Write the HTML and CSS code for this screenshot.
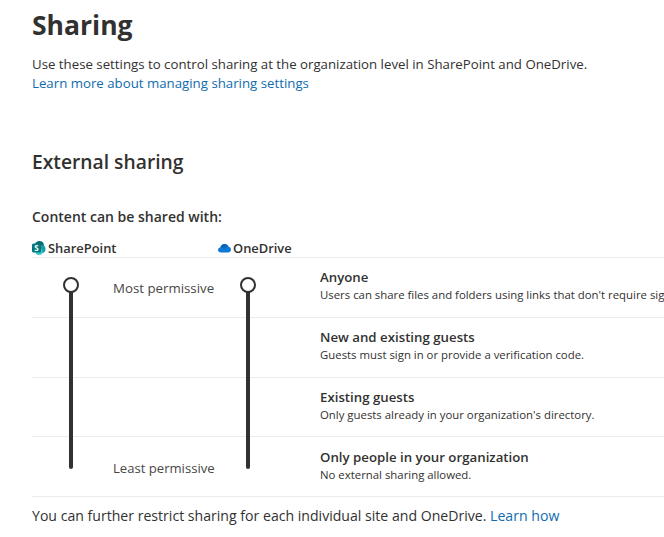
FILE: index.html
```html
<!DOCTYPE html>
<html lang="en">
<head>
  <meta charset="UTF-8" />
  <meta name="viewport" content="width=device-width, initial-scale=1.0" />
  <title>Sharing</title>
  <link rel="stylesheet" href="styles.css">
</head>
<body>
  <main>
    <h1 class="page-title">Sharing</h1>
    <p class="intro">
      Use these settings to control sharing at the organization level in SharePoint and OneDrive.<br>
      <a href="#">Learn more about managing sharing settings</a>
    </p>

    <h2 class="section-title">External sharing</h2>
    <div class="shared-with">Content can be shared with:</div>

    <div class="products">
      <span class="product product-sp">
        <svg width="14" height="14" viewBox="0 0 14 14">
          <circle cx="7.500" cy="4.500" r="4.500" fill="#036c70"/>
          <circle cx="9.500" cy="8" r="4" fill="#1a9ba1"/>
          <circle cx="7" cy="10.500" r="3.500" fill="#37c6d0"/>
          <rect x="0" y="2.500" width="9" height="9" rx="1.500" fill="#03787c"/>
          <text x="4.500" y="10" class="sp-letter">S</text>
        </svg>
        SharePoint
      </span>
      <span class="product product-od">
        <svg width="13" height="10" viewBox="0 0 13 10">
          <path d="M2.800 9.500C1.300 9.500 0 8.400 0 7 0 5.700 1 4.700 2.300 4.600 2.800 2.500 4.500 1 6.600 1c1.700 0 3.100 1 3.800 2.400C11.900 3.700 13 5 13 6.600c0 1.600-1.200 2.900-2.800 2.900z" fill="#0f78d4"/>
          <path d="M2.300 4.600C2.800 2.500 4.500 1 6.600 1c1.700 0 3.100 1 3.800 2.400C8 3.400 6.800 4.600 6.200 5.600 5.100 4.800 3.700 4.400 2.300 4.600z" fill="#0364b8"/>
        </svg>
        OneDrive
      </span>
    </div>

    <div class="levels">
      <div class="slider slider-sp"><span class="knob"></span></div>
      <div class="slider slider-od"><span class="knob"></span></div>

      <div class="level">
        <div class="level-hint">Most permissive</div>
        <div class="level-text">
          <strong>Anyone</strong>
          <span>Users can share files and folders using links that don't require sign-in.</span>
        </div>
      </div>
      <div class="level">
        <div class="level-hint"></div>
        <div class="level-text">
          <strong>New and existing guests</strong>
          <span>Guests must sign in or provide a verification code.</span>
        </div>
      </div>
      <div class="level">
        <div class="level-hint"></div>
        <div class="level-text">
          <strong>Existing guests</strong>
          <span>Only guests already in your organization's directory.</span>
        </div>
      </div>
      <div class="level level-last">
        <div class="level-hint">Least permissive</div>
        <div class="level-text">
          <strong>Only people in your organization</strong>
          <span>No external sharing allowed.</span>
        </div>
      </div>
    </div>

    <p class="further">You can further restrict sharing for each individual site and OneDrive. <a href="#">Learn how</a></p>
  </main>
</body>
</html>
```

FILE: styles.css
```css
html, body {
  height: 100%;
  overflow: hidden;
}
body {
  margin: 0;
  font-family: "Open Sans", sans-serif;
  background-color: #ffffff;
  color: #323130;
}
main {
  padding: 0 0 0 32px;
  width: 800px;
}
a {
  color: #0f6cae;
  text-decoration: none;
}
.page-title {
  margin: 0;
  padding-top: 7px;
  font-size: 26.5px;
  line-height: 36px;
  font-weight: 700;
}
.intro {
  margin: 12px 0 0;
  font-size: 13.26px;
  line-height: 19px;
  white-space: nowrap;
}
.section-title {
  margin: 55px 0 0;
  font-size: 19.25px;
  line-height: 28px;
  font-weight: 600;
}
.shared-with {
  margin-top: 31px;
  font-size: 14px;
  line-height: 20px;
  font-weight: 600;
}
.products {
  display: flex;
  height: 19px;
  margin-top: 11px;
  font-size: 12.9px;
  font-weight: 600;
  line-height: 20px;
}
.product {
  display: flex;
  align-items: center;
  gap: 2px;
}
.product-sp {
  width: 186px;
}
.sp-letter {
  font-size: 8px;
  font-weight: 700;
  fill: #ffffff;
  text-anchor: middle;
}
.levels {
  position: relative;
}
.level {
  display: flex;
  height: 58.75px;
  border-top: 1px solid #edebe9;
}
.level-last {
  border-bottom: 1px solid #edebe9;
}
.level-hint {
  width: 288px;
  flex-shrink: 0;
  padding: 20px 0 0 81px;
  box-sizing: border-box;
  font-size: 13.27px;
  line-height: 20px;
  color: #484644;
}
.level-text {
  padding-top: 10px;
  white-space: nowrap;
}
.level-last .level-hint {
  padding-top: 21px;
  font-size: 13.1px;
}
.level-last .level-text {
  padding-top: 11px;
}
.level-text strong {
  display: block;
  font-size: 13.25px;
  line-height: 19px;
  font-weight: 600;
}
.level-text span {
  display: block;
  font-size: 11.38px;
  line-height: 16px;
}
.slider {
  position: absolute;
  top: 28px;
  width: 4px;
  height: 184px;
  border-radius: 2px;
  background-color: #323130;
}
.slider-sp {
  left: 37px;
}
.slider-od {
  left: 214px;
}
.knob {
  position: absolute;
  top: -8px;
  left: -6px;
  width: 12px;
  height: 12px;
  border: 2px solid #323130;
  border-radius: 50%;
  background-color: #ffffff;
}
.further {
  margin: 9px 0 0;
  font-size: 14.1px;
  line-height: 20px;
  white-space: nowrap;
}
```
